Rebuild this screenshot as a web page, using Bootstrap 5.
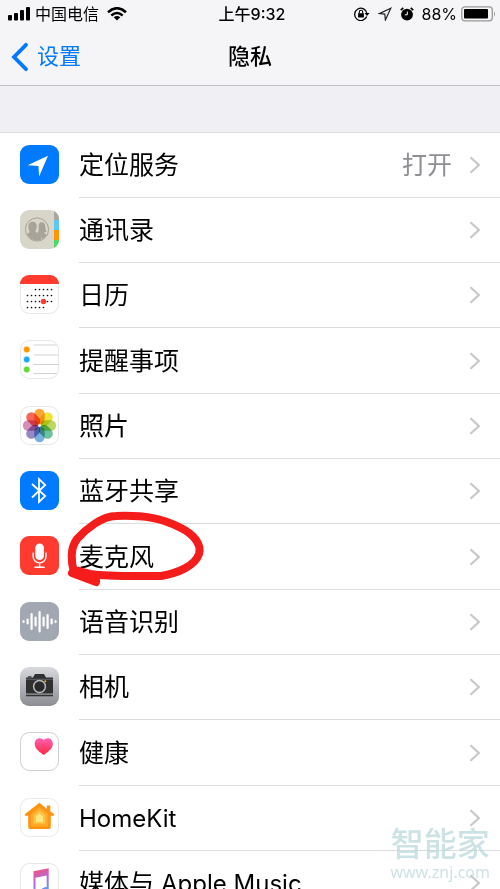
<!DOCTYPE html>
<html lang="zh-CN">
<head>
<meta charset="utf-8">
<meta name="viewport" content="width=device-width, initial-scale=1">
<title>隐私</title>
<link href="https://cdn.jsdelivr.net/npm/bootstrap@5.3.0/dist/css/bootstrap.min.css" rel="stylesheet">
<style>
  body { font-family: Inter, "Noto Sans CJK SC", sans-serif; background: #fff; color: #000; }
  .top-area { background: #f5f5f7; border-bottom: 1px solid #c3c3c7; }
  .status-bar { height: 28px; font-size: 16px; line-height: 28px; padding: 0 4px 0 8px; }
  .status-bar > div { flex: 1 1 0; }
  .status-bar .clock { font-weight: 500; }
  .title-bar { height: 57px; padding: 0 11px; }
  .title-bar > * { flex: 1 1 0; }
  .back-link { color: #007aff; font-size: 22px; gap: 8px; }
  .page-title { font-size: 22px; font-weight: 500; }
  .spacer-band { height: 47px; background: #efeff4; border-bottom: 1px solid #dcdce0; }
  .setting { height: 65px; padding-left: 20px; gap: 20px; color: #000; font-size: 25px; }
  .setting:nth-child(3n+1) { height: 66px; }
  .setting:first-child { height: 65px; }
  .setting .tile { width: 39px; height: 39px; margin-bottom: 3px; }
  .setting .line { border-bottom: 1px solid #dcdcdf; padding-right: 19px; }
  .setting .line > span { padding-top: 2px; }
  .latin { font-size: 24px; }
  .state { color: #8e8e93; margin-right: 17px; }
  .marker { position: absolute; left: 66px; top: 510px; z-index: 2; pointer-events: none; }
  .stamp { position: absolute; right: 10px; bottom: 7px; z-index: 3; color: #bdd9dc; opacity: .75; pointer-events: none; }
  .stamp-name { font-size: 33px; line-height: 36px; font-weight: 500; }
  .stamp-site { font: 16px/20px "Noto Sans", sans-serif; }
</style>
<script src="https://cdn.jsdelivr.net/npm/bootstrap@5.3.0/dist/js/bootstrap.bundle.min.js"></script>
</head>
<body>
<svg class="d-none" aria-hidden="true">
  <symbol id="chev" viewBox="0 0 12 18"><path d="M1.500 1.200 9.800 9l-8.300 7.800" fill="none" stroke="#c7c7cc" stroke-width="2.200"/></symbol>
</svg>
<div class="vh-100 overflow-hidden position-relative">
  <header class="top-area">
    <div class="status-bar d-flex align-items-center">
      <div class="d-flex align-items-center">
        <svg width="23" height="14" viewBox="0 0 23 14"><rect y="8" width="4" height="5.500" rx="1"/><rect x="6" y="6" width="4" height="7.500" rx="1"/><rect x="12" y="3" width="4" height="10.500" rx="1"/><rect x="18" width="4" height="13.500" rx="1"/></svg>
        <span class="ms-1">中国电信</span>
        <svg class="ms-2" width="20" height="14" viewBox="0 0 20 14"><g fill="none" stroke="#000" stroke-width="2.500"><path d="M1 5.200Q10-2.800 19 5.200"/><path d="M4.300 8.500Q10 3.500 15.700 8.500"/></g><path d="M6.700 10.300Q10 7.800 13.300 10.300L10 13.600Z"/></svg>
      </div>
      <span class="clock">上午9:32</span>
      <div class="d-flex align-items-center justify-content-end">
        <svg width="16" height="14" viewBox="0 0 16 14"><path d="M12.700 9.500A6.200 6.200 0 1 1 13 6.500" fill="none" stroke="#000" stroke-width="1.300"/><path d="M10.600 6h5L13 9ZM4.100 6.200h5.800v4.300H4.100Z"/><path d="M5.300 6.500V5a1.700 1.700 0 0 1 3.400 0v1.500" fill="none" stroke="#000" stroke-width="1.100"/></svg>
        <svg class="ms-2" width="14" height="14" viewBox="0 0 14 14"><path d="M12.800 1.200 1.300 6.600l5.500.5.600 5.900Z" fill="none" stroke="#222" stroke-width="1.200"/></svg>
        <svg class="ms-2" width="14" height="14" viewBox="0 0 14 14"><circle cx="7" cy="7.600" r="5.900"/><path d="M.8 3.100 3.300.8M13.200 3.100 10.700.8" stroke="#000" stroke-width="1.700"/><path d="M7.300 4.500v3.300H4.800" fill="none" stroke="#fff" stroke-width="1"/></svg>
        <span class="ms-2">88%</span>
        <svg class="ms-1" width="35" height="16" viewBox="0 0 35 16"><rect x=".8" y=".8" width="30.500" height="14" rx="3" fill="none" stroke="#999" stroke-width="1.300"/><rect x="3" y="3" width="24" height="9.600" rx="1"/><path d="M33 5.200q2 2.600 0 5.200Z" fill="#999"/></svg>
      </div>
    </div>
    <nav class="title-bar d-flex align-items-center">
      <a class="back-link d-flex align-items-center text-decoration-none" href="#"><svg width="18" height="30" viewBox="0 0 18 30"><path d="M15 2.800 3 15l12 12.200" fill="none" stroke="#007aff" stroke-width="3.800" stroke-linecap="round"/></svg>设置</a>
      <h1 class="page-title text-center m-0">隐私</h1>
      <div></div>
    </nav>
  </header>
  <div class="spacer-band"></div>

  <main class="d-flex flex-column">
    <a class="setting d-flex align-items-center text-decoration-none" href="#">
      <svg class="tile flex-shrink-0" viewBox="0 0 39 39"><rect width="39" height="39" rx="9" fill="#007aff"/><path d="M28 10.800 7.600 20.300l10.800.7.700 10.600Z" fill="#fff"/></svg>
      <span class="line h-100 flex-grow-1 d-flex align-items-center"><span class="me-auto">定位服务</span><span class="state">打开</span><svg width="12" height="18"><use href="#chev"/></svg></span>
    </a>
    <a class="setting d-flex align-items-center text-decoration-none" href="#">
      <svg class="tile flex-shrink-0" viewBox="0 0 39 39"><defs><clipPath id="cc"><rect width="39" height="39" rx="9"/></clipPath><clipPath id="ring"><circle cx="17" cy="19.500" r="11"/></clipPath></defs><g clip-path="url(#cc)"><path fill="#d8d5c9" d="M0 0h39v39H0z"/><path fill="#aaa89e" d="M34 0h5v10h-5z"/><path fill="#5ac8fa" d="M34 10h5v10h-5z"/><path fill="#ff9500" d="M34 20h5v10h-5z"/><path fill="#4cd964" d="M34 30h5v9h-5z"/></g><circle cx="17" cy="19.500" r="11.600" fill="none" stroke="#a8a398" stroke-width="1"/><g fill="#a8a398" clip-path="url(#ring)"><path d="M12.700 11.700c3 0 4.300 2 4 5.300-.1 2-1 3-1.300 4.300 0 2 5.300 2 6 6V32H5v-6c1-2.500 4.700-2.500 4.600-4.700-.3-1.300-1.300-2-1.300-4.300 0-3.300 1.400-5.300 4.400-5.300Z"/><path d="M21.300 12.200c3 0 4.100 2 4.100 5.300 0 2 .6 3.200 1.300 4.200l-2.700.9c0 1.900 4.500 1.900 5 4.400l-6.500 3c0-4-4.200-5.500-5.300-7l1.300-1.700c.3-1.800.2-2.300.2-4.300 0-3 .6-4.800 2.600-4.800Z"/></g></svg>
      <span class="line h-100 flex-grow-1 d-flex align-items-center"><span class="me-auto">通讯录</span><svg width="12" height="18"><use href="#chev"/></svg></span>
    </a>
    <a class="setting d-flex align-items-center text-decoration-none" href="#">
      <svg class="tile flex-shrink-0" viewBox="0 0 39 39"><rect x=".5" y=".5" width="38" height="38" rx="9" fill="#fff" stroke="#e6e6e6"/><path d="M0 9A9 9 0 0 1 9 0h21a9 9 0 0 1 9 9Z" fill="#ff3b30"/><g stroke="#111" stroke-width="1.700" stroke-linecap="round" stroke-dasharray="0 4"><path d="M15.500 14.500h16.200M7.500 20.500h24.200M7.500 26.500h24.200M7.500 32.500h16.200"/></g><circle cx="23.500" cy="26.500" r="2.700" fill="#ff3b30"/></svg>
      <span class="line h-100 flex-grow-1 d-flex align-items-center"><span class="me-auto">日历</span><svg width="12" height="18"><use href="#chev"/></svg></span>
    </a>
    <a class="setting d-flex align-items-center text-decoration-none" href="#">
      <svg class="tile flex-shrink-0" viewBox="0 0 39 39"><rect x=".5" y=".5" width="38" height="38" rx="9" fill="#fff" stroke="#e6e6e6"/><path d="M13.500 5h23M13.500 15h25M13.500 24.500h25M13.500 33.500h23" stroke="#d3d3d5"/><g stroke-opacity=".35" stroke-width="1.500"><circle cx="6.700" cy="9.500" r="2.700" fill="#ff9500" stroke="#ff9500"/><circle cx="6.700" cy="19.500" r="2.700" fill="#1ba8f8" stroke="#1ba8f8"/><circle cx="6.700" cy="29.500" r="2.700" fill="#63da38" stroke="#63da38"/></g></svg>
      <span class="line h-100 flex-grow-1 d-flex align-items-center"><span class="me-auto">提醒事项</span><svg width="12" height="18"><use href="#chev"/></svg></span>
    </a>
    <a class="setting d-flex align-items-center text-decoration-none" href="#">
      <svg class="tile flex-shrink-0" viewBox="0 0 39 39"><defs><rect id="petal" x="14.300" y="2.800" width="10.400" height="15.700" rx="5.200" style="mix-blend-mode:multiply"/></defs><rect x=".5" y=".5" width="38" height="38" rx="9" fill="#fff" stroke="#e6e6e6"/><g fill-opacity=".88"><use href="#petal" fill="#fc9a1d"/><use href="#petal" fill="#efe01e" transform="rotate(45 19.500 19.500)" style="mix-blend-mode:multiply"/><use href="#petal" fill="#b1d34c" transform="rotate(90 19.500 19.500)" style="mix-blend-mode:multiply"/><use href="#petal" fill="#55bb8e" transform="rotate(135 19.500 19.500)" style="mix-blend-mode:multiply"/><use href="#petal" fill="#65a5dc" transform="rotate(180 19.500 19.500)" style="mix-blend-mode:multiply"/><use href="#petal" fill="#8c78ba" transform="rotate(225 19.500 19.500)" style="mix-blend-mode:multiply"/><use href="#petal" fill="#cf7daf" transform="rotate(270 19.500 19.500)" style="mix-blend-mode:multiply"/><use href="#petal" fill="#f25345" transform="rotate(315 19.500 19.500)" style="mix-blend-mode:multiply"/></g><circle cx="19.500" cy="19.500" r="1.300" fill="#fff"/></svg>
      <span class="line h-100 flex-grow-1 d-flex align-items-center"><span class="me-auto">照片</span><svg width="12" height="18"><use href="#chev"/></svg></span>
    </a>
    <a class="setting d-flex align-items-center text-decoration-none" href="#">
      <svg class="tile flex-shrink-0" viewBox="0 0 39 39"><rect width="39" height="39" rx="9" fill="#007aff"/><path d="m12 13 13.200 12-6.200 6V8l6.200 6L12 26.500" fill="none" stroke="#fff" stroke-width="1.800"/></svg>
      <span class="line h-100 flex-grow-1 d-flex align-items-center"><span class="me-auto">蓝牙共享</span><svg width="12" height="18"><use href="#chev"/></svg></span>
    </a>
    <a class="setting d-flex align-items-center text-decoration-none" href="#">
      <svg class="tile flex-shrink-0" viewBox="0 0 39 39"><rect width="39" height="39" rx="9" fill="#ff3b30"/><rect x="15.300" y="7.500" width="8.600" height="16.500" rx="4.300" fill="#fff"/><path d="M13.200 16.500v4a6.400 6.400 0 0 0 12.800 0v-4M19.600 27v4M14.500 31.200h10.200" fill="none" stroke="#fff" stroke-width="1.400"/></svg>
      <span class="line h-100 flex-grow-1 d-flex align-items-center"><span class="me-auto">麦克风</span><svg width="12" height="18"><use href="#chev"/></svg></span>
    </a>
    <a class="setting d-flex align-items-center text-decoration-none" href="#">
      <svg class="tile flex-shrink-0" viewBox="0 0 39 39"><rect width="39" height="39" rx="9" fill="#a2a8b2"/><path d="M3.500 19v1M7.600 17.500v4M11.600 12v15M15.600 15.500v8M19.600 10v19.500M23.600 15.500v8M27.600 13v13M31.600 17.500v4M35.500 19v1" stroke="#fff" stroke-width="2.200" stroke-linecap="round"/></svg>
      <span class="line h-100 flex-grow-1 d-flex align-items-center"><span class="me-auto">语音识别</span><svg width="12" height="18"><use href="#chev"/></svg></span>
    </a>
    <a class="setting d-flex align-items-center text-decoration-none" href="#">
      <svg class="tile flex-shrink-0" viewBox="0 0 39 39"><defs><linearGradient id="cam" x2="0" y2="1"><stop stop-color="#d9dadd"/><stop offset="1" stop-color="#8b8d93"/></linearGradient></defs><rect width="39" height="39" rx="9" fill="url(#cam)"/><path d="M6 10.500h7l2-3.500h9l2 3.500h7V26.500H6ZM8 9.200h3.500v1H8Z" fill="#303033"/><path d="M6 12.300h27" stroke="#85878b" stroke-width=".6"/><path d="M6 28.500h27" stroke="#333" stroke-width="1.600"/><circle cx="19.500" cy="19.500" r="5.900" fill="#29292b" stroke="#b9babd" stroke-width="1.500"/><circle cx="25.300" cy="14.300" r="1" fill="#ffb800"/></svg>
      <span class="line h-100 flex-grow-1 d-flex align-items-center"><span class="me-auto">相机</span><svg width="12" height="18"><use href="#chev"/></svg></span>
    </a>
    <a class="setting d-flex align-items-center text-decoration-none" href="#">
      <svg class="tile flex-shrink-0" viewBox="0 0 39 39"><defs><linearGradient id="hrt" x2="0" y2="1"><stop stop-color="#ff5fb4"/><stop offset="1" stop-color="#ff2a3d"/></linearGradient></defs><rect x=".5" y=".5" width="38" height="38" rx="9" fill="#fff" stroke="#cfcfd1"/><path d="M23.700 8.200C21.500 5 14.700 5.500 14.700 12c0 5 5.500 8.300 9 11 3.500-2.700 9.100-6 9.100-11 0-6.500-6.900-7-9.100-3.800Z" fill="url(#hrt)"/></svg>
      <span class="line h-100 flex-grow-1 d-flex align-items-center"><span class="me-auto">健康</span><svg width="12" height="18"><use href="#chev"/></svg></span>
    </a>
    <a class="setting d-flex align-items-center text-decoration-none" href="#">
      <svg class="tile flex-shrink-0" viewBox="0 0 39 39"><rect x=".5" y=".5" width="38" height="38" rx="9" fill="#fff" stroke="#e9e9e9"/><path d="M19.500 4.700 4.500 16.500l.7 1.200h3V29q0 2 2 2h18.600q2 0 2-2V17.700h3l.7-1.200-4.200-3.300V7.500h-3.500V11Z" fill="#ff9310"/><path d="M19.500 9.200 10.800 16v12.500h17.400V16Z" fill="#ffa92a"/><path d="m19.500 12.200-5.900 5v8.500h11.800v-8.500Z" fill="#ffc446"/><path d="m19.500 15.500-3.500 3V24h7v-5.500Z" fill="#ffe780"/></svg>
      <span class="line h-100 flex-grow-1 d-flex align-items-center"><span class="me-auto latin">HomeKit</span><svg width="12" height="18"><use href="#chev"/></svg></span>
    </a>
    <a class="setting d-flex align-items-center text-decoration-none" href="#">
      <svg class="tile flex-shrink-0" viewBox="0 0 39 39"><defs><linearGradient id="mus" x1=".3" x2=".6" y2="1"><stop stop-color="#fb5269"/><stop offset=".5" stop-color="#b268e8"/><stop offset="1" stop-color="#36b2fb"/></linearGradient></defs><rect x=".5" y=".5" width="38" height="38" rx="9" fill="#fff" stroke="#e6e6e6"/><path d="M13.500 8.300 28.700 5.200V26c0 3-2 4.600-4.600 4.600-2 0-3-1.200-3-2.800 0-2.500 2.400-3.300 5.600-3.700V12.400L15.500 14.700V29c0 3-2 4.600-4.600 4.600-2 0-3-1.200-3-2.800 0-2.500 2.400-3.300 5.600-3.700Z" fill="url(#mus)"/></svg>
      <span class="line h-100 flex-grow-1 d-flex align-items-center"><span class="me-auto">媒体与 <span class="latin">Apple Music</span></span><svg width="12" height="18"><use href="#chev"/></svg></span>
    </a>
  </main>

  <svg class="marker" width="140" height="80" viewBox="0 0 140 80" aria-hidden="true"><path d="M8 62C5 52 4 38 11 29 20 19 36 6 50 6 78 5 96 8 115 18 127 24 136 34 133 44 129 56 112 63 95 66 72 66 45 67 24 64L12 61" fill="none" stroke="#f51d1b" stroke-width="8" stroke-linecap="round"/><path d="M6 63 30 72M13 61l17 10" stroke="#f51d1b" stroke-width="8" stroke-linecap="round"/></svg>
  <div class="stamp text-center"><div class="stamp-name">智能家</div><div class="stamp-site">www.znj.com</div></div>
</div>
</body>
</html>
